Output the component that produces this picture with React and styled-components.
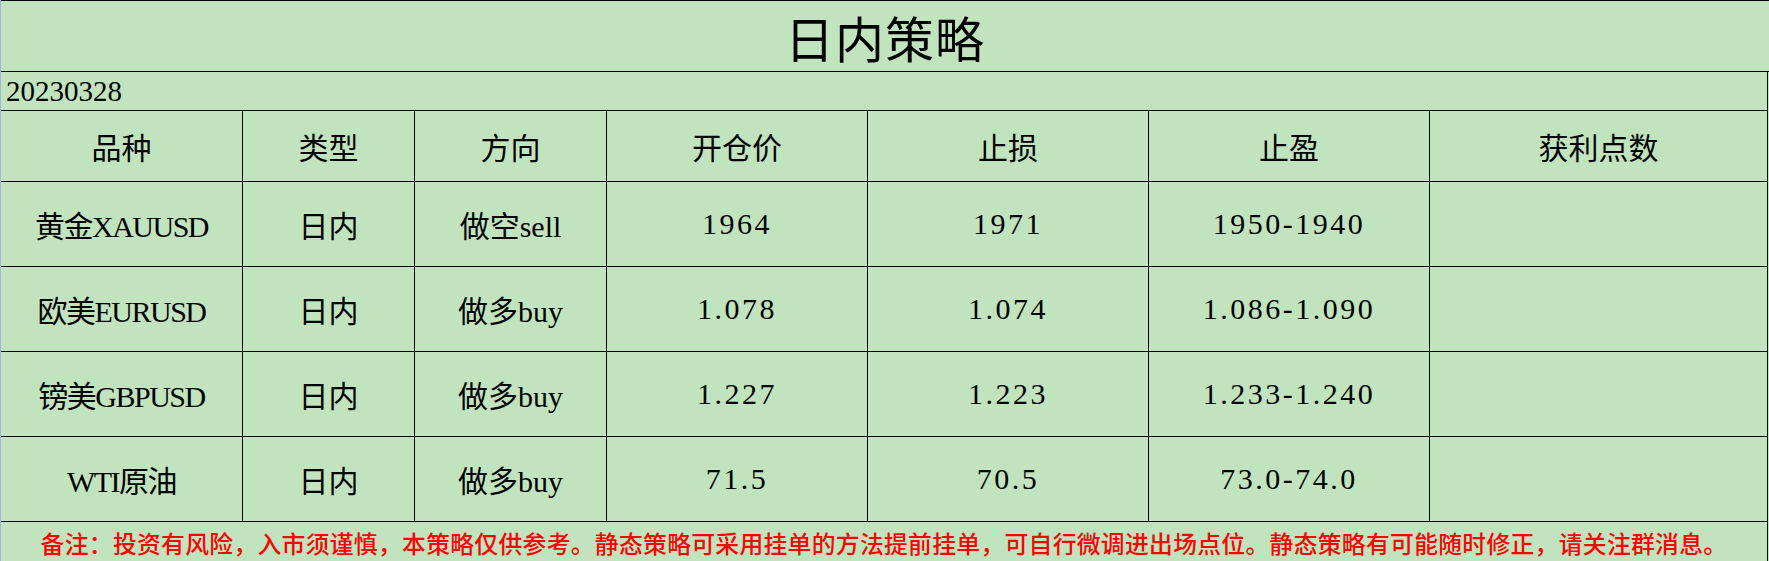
import React from "react";
import styled, { createGlobalStyle } from "styled-components";

const GlobalStyle = createGlobalStyle`
    html, body {
        margin: 0;
        padding: 0;
        background: #c1e4bf;
    }
    * {
        box-sizing: border-box;
    }
`;

const Sheet = styled.div`
    width: 1769px;
    height: 561px;
    background: #c1e4bf;
    border-left: 1px solid #9fb6dc;
    font-family: "Liberation Serif", "Noto Sans CJK SC", serif;
    color: #000;
    overflow: hidden;
`;

const Title = styled.div`
    height: 72px;
    border-top: 1px solid #000;
    border-bottom: 1px solid #000;
    display: flex;
    align-items: center;
    justify-content: center;
    font-family: "Noto Sans CJK SC", sans-serif;
    font-size: 49px;
    letter-spacing: 1px;
`;

const Grid = styled.div`
    width: 1767px;
    display: grid;
    grid-template-columns: 242px 172px 192px 261px 281px 281px 338px;
    grid-template-rows: 39px 71px 85px 85px 85px 85px 40px;
`;

const DateRow = styled.div`
    grid-column: 1 / -1;
    border-right: 1px solid #000;
    border-bottom: 1px solid #000;
    display: flex;
    align-items: center;
    padding-left: 5px;
    font-size: 29px;
`;

const spacing = { num: "2.5px", mixed: "-1.5px", plain: "0" };

const Cell = styled.div`
    border-right: 1px solid #000;
    border-bottom: 1px solid #000;
    display: flex;
    align-items: center;
    justify-content: center;
    font-family: ${(p) => (p.$head ? '"Noto Sans CJK SC", sans-serif' : '"Liberation Serif", "Noto Sans CJK SC", serif')};
    font-size: 30px;
    letter-spacing: ${(p) => spacing[p.$kind || "plain"]};
    white-space: nowrap;
`;

const Note = styled.div`
    grid-column: 1 / -1;
    border-right: 1px solid #000;
    display: flex;
    align-items: center;
    justify-content: center;
    font-family: "Noto Sans CJK SC", sans-serif;
    font-weight: 500;
    font-size: 23.8px;
    letter-spacing: 0.3px;
    color: #ff0000;
    white-space: nowrap;
`;

const headers = ["品种", "类型", "方向", "开仓价", "止损", "止盈", "获利点数"];

const rows = [
    { name: "黄金XAUUSD", type: "日内", dir: "做空sell", open: "1964", stop: "1971", target: "1950-1940" },
    { name: "欧美EURUSD", type: "日内", dir: "做多buy", open: "1.078", stop: "1.074", target: "1.086-1.090" },
    { name: "镑美GBPUSD", type: "日内", dir: "做多buy", open: "1.227", stop: "1.223", target: "1.233-1.240" },
    { name: "WTI原油", type: "日内", dir: "做多buy", open: "71.5", stop: "70.5", target: "73.0-74.0" },
];

const App = () => {
    return (
        <Sheet>
            <GlobalStyle />
            <Title>日内策略</Title>
            <Grid>
                <DateRow>20230328</DateRow>
                {headers.map((h) => (
                    <Cell $head key={h}>{h}</Cell>
                ))}
                {rows.map((r) => (
                    <React.Fragment key={r.name}>
                        <Cell $kind="mixed">{r.name}</Cell>
                        <Cell>{r.type}</Cell>
                        <Cell>{r.dir}</Cell>
                        <Cell $kind="num">{r.open}</Cell>
                        <Cell $kind="num">{r.stop}</Cell>
                        <Cell $kind="num">{r.target}</Cell>
                        <Cell></Cell>
                    </React.Fragment>
                ))}
                <Note>备注：投资有风险，入市须谨慎，本策略仅供参考。静态策略可采用挂单的方法提前挂单，可自行微调进出场点位。静态策略有可能随时修正，请关注群消息。</Note>
            </Grid>
        </Sheet>
    );
};

export default App;
